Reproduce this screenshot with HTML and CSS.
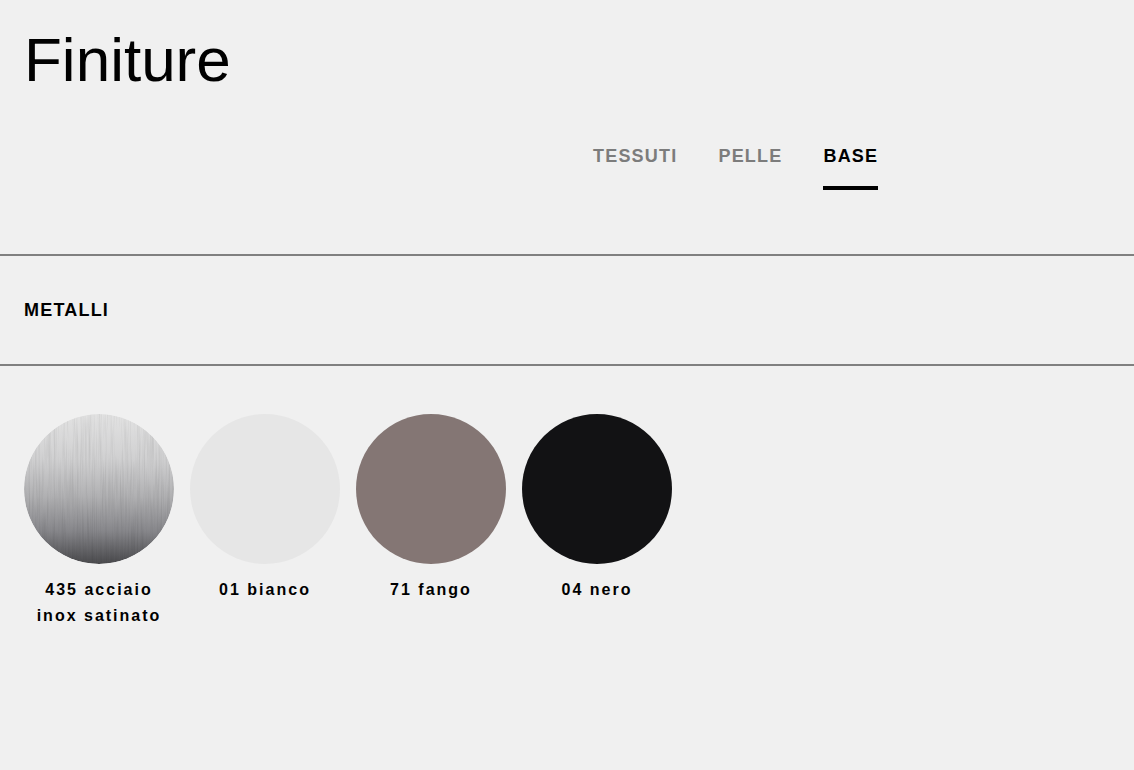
FILE: index.html
```html
<!DOCTYPE html>
<html lang="it">
<head>
<meta charset="utf-8">
<title>Finiture</title>
<link rel="stylesheet" href="styles.css">
</head>
<body>
<header class="top">
  <h1 class="title">Finiture</h1>
  <nav class="tabs">
    <a class="tab">TESSUTI</a>
    <a class="tab">PELLE</a>
    <a class="tab active">BASE</a>
  </nav>
</header>
<section class="group">
  <h2 class="group-title">METALLI</h2>
</section>
<div class="swatches">
  <div class="swatch">
    <svg class="dot" viewBox="0 0 150 150" width="150" height="150">
      <defs>
        <linearGradient id="steel" x1="0" y1="0" x2="0" y2="1">
          <stop offset="0" stop-color="#e2e2e2"/>
          <stop offset="0.3" stop-color="#d0d0d1"/>
          <stop offset="0.55" stop-color="#b0b0b2"/>
          <stop offset="0.78" stop-color="#86868a"/>
          <stop offset="1" stop-color="#4a4a4d"/>
        </linearGradient>
        <filter id="brush" x="0" y="0" width="100%" height="100%">
          <feTurbulence type="fractalNoise" baseFrequency="0.6 0.02" numOctaves="2" seed="4" result="n"/>
          <feColorMatrix type="matrix" values="0 0 0 0 0  0 0 0 0 0  0 0 0 0 0  1.2 0 0 0 -0.5" in="n"/>
        </filter>
        <clipPath id="cc"><circle cx="75" cy="75" r="75"/></clipPath>
      </defs>
      <g clip-path="url(#cc)">
        <rect width="150" height="150" fill="url(#steel)"/>
        <rect width="150" height="150" filter="url(#brush)" opacity="0.14"/>
      </g>
    </svg>
    <p class="label">435 acciaio inox satinato</p>
  </div>
  <div class="swatch">
    <span class="dot bianco"></span>
    <p class="label">01 bianco</p>
  </div>
  <div class="swatch">
    <span class="dot fango"></span>
    <p class="label">71 fango</p>
  </div>
  <div class="swatch">
    <span class="dot nero"></span>
    <p class="label">04 nero</p>
  </div>
</div>
</body>
</html>
```
FILE: styles.css
```css
* { box-sizing: border-box; }
html, body {
  margin: 0;
  background: #f0f0f0;
  font-family: "Liberation Sans", Arial, sans-serif;
  color: #000;
}
.top {
  padding: 28px 24px 0;
}
.title {
  margin: 0;
  font-size: 62px;
  line-height: 64px;
  font-weight: 400;
}
.tabs {
  display: flex;
  gap: 41px;
  margin: 53px 0 0 569px;
  padding-bottom: 64px;
}
.tab {
  font-size: 18px;
  line-height: 22px;
  font-weight: 700;
  letter-spacing: 1.2px;
  color: #7c7c7c;
  padding-bottom: 19px;
  border-bottom: 4px solid transparent;
  cursor: pointer;
}
.tab.active {
  color: #000;
  border-bottom-color: #000;
  margin-right: -1.2px;
}
.group {
  border-top: 2px solid #808080;
  border-bottom: 2px solid #808080;
  padding: 43px 24px 43px;
}
.group-title {
  margin: 0;
  font-size: 18px;
  line-height: 22px;
  font-weight: 700;
  letter-spacing: 1.2px;
}
.swatches {
  display: flex;
  gap: 16px;
  padding: 48px 24px 0;
}
.swatch {
  width: 150px;
  display: flex;
  flex-direction: column;
  align-items: center;
}
.dot {
  display: block;
  width: 150px;
  height: 150px;
  border-radius: 50%;
}
.bianco { background: #e6e6e6; }
.fango { background: #847674; }
.nero { background: #121214; }
.label {
  margin: 13px 0 0;
  font-size: 16px;
  line-height: 26px;
  font-weight: 700;
  letter-spacing: 2px;
  text-align: center;
}
```
